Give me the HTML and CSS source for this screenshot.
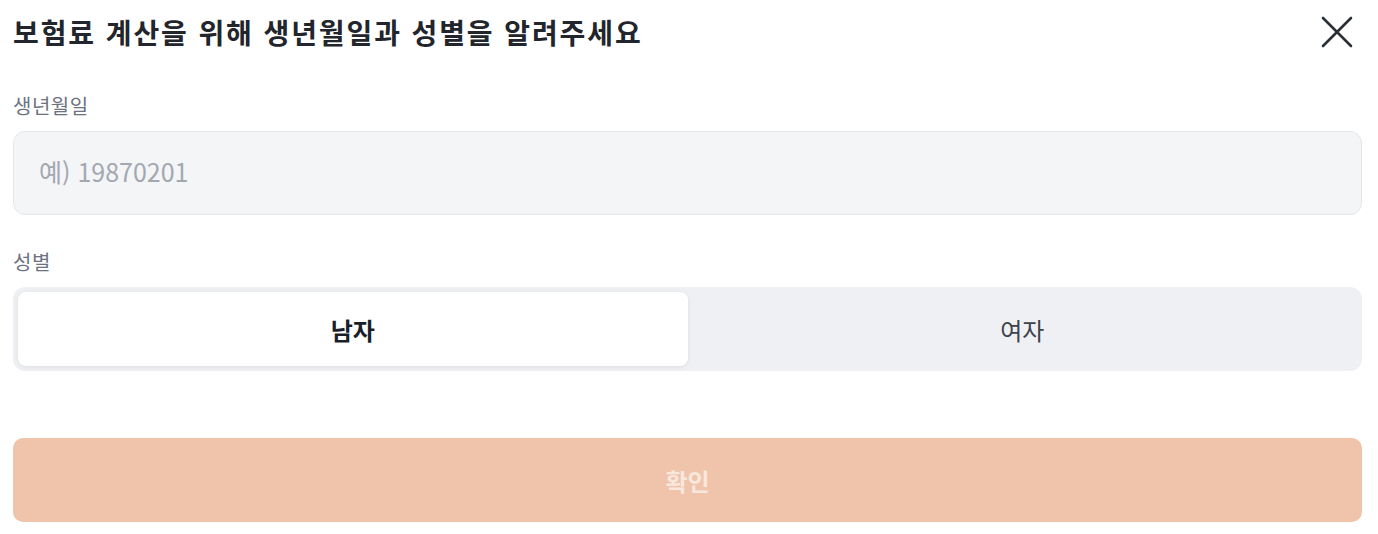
FILE: index.html
```html
<!DOCTYPE html>
<html lang="ko">
<head>
    <meta charset="UTF-8">
    <meta name="viewport" content="width=device-width, initial-scale=1.0">
    <title>보험료 계산</title>
    <link rel="stylesheet" href="styles.css">
</head>
<body>
    <div class="sheet">
        <div class="sheet-header">
            <h1>보험료 계산을 위해 생년월일과 성별을 알려주세요</h1>
            <button class="close-btn" aria-label="닫기">
                <svg width="34" height="34" viewBox="0 0 34 34" fill="none">
                    <path d="M3 3L31 31M31 3L3 31" stroke="#2b2f36" stroke-width="2.6" stroke-linecap="round"/>
                </svg>
            </button>
        </div>

        <div class="field">
            <label class="field-label" for="birth">생년월일</label>
            <input class="text-input" id="birth" type="text" placeholder="예) 19870201">
        </div>

        <div class="field">
            <span class="field-label">성별</span>
            <div class="segment">
                <button class="segment-item active">남자</button>
                <button class="segment-item">여자</button>
            </div>
        </div>

        <button class="submit-btn" disabled>확인</button>
    </div>
</body>
</html>
```

FILE: styles.css
```css
* {
    margin: 0;
    padding: 0;
    box-sizing: border-box;
    font-family: 'Noto Sans CJK KR', 'Noto Sans', sans-serif;
}

body {
    background: #fff;
    color: #191f28;
}

.sheet {
    padding: 12px 16px 12px 13px;
}

.sheet-header {
    display: flex;
    justify-content: space-between;
    align-items: center;
    height: 40px;
    margin-bottom: 40px;
}

h1 {
    font-size: 28px;
    font-weight: 700;
    color: #22252b;
    letter-spacing: 1.9px;
}

.close-btn {
    border: none;
    background: none;
    cursor: pointer;
    display: flex;
    margin-right: 8px;
}

.field {
    display: flex;
    flex-direction: column;
}

.field-label {
    font-size: 20px;
    color: #6b7280;
    line-height: 28px;
    letter-spacing: 0.5px;
    margin-bottom: 11px;
}

.text-input {
    height: 84px;
    padding: 0 25px 4px;
    font-size: 25px;
    border: 1px solid #e4e6ea;
    border-radius: 12px;
    background: #f4f5f7;
    color: #191f28;
    outline: none;
    margin-bottom: 33px;
}

.text-input::placeholder {
    color: #a3a7b0;
}

.segment {
    display: flex;
    height: 84px;
    padding: 5px;
    background: #eff0f4;
    border-radius: 12px;
}

.segment-item {
    flex: 1;
    border: none;
    background: none;
    font-size: 24px;
    color: #3d424b;
    border-radius: 8px;
    cursor: pointer;
}

.segment-item.active {
    background: #fff;
    color: #191f28;
    font-weight: 700;
    box-shadow: 0 1px 4px rgba(0, 0, 0, 0.08);
}

.submit-btn {
    display: block;
    width: 100%;
    height: 84px;
    margin-top: 67px;
    border: none;
    border-radius: 10px;
    background: #f0c4ab;
    color: rgba(255, 255, 255, 0.6);
    font-size: 24px;
    font-weight: 700;
}
```
